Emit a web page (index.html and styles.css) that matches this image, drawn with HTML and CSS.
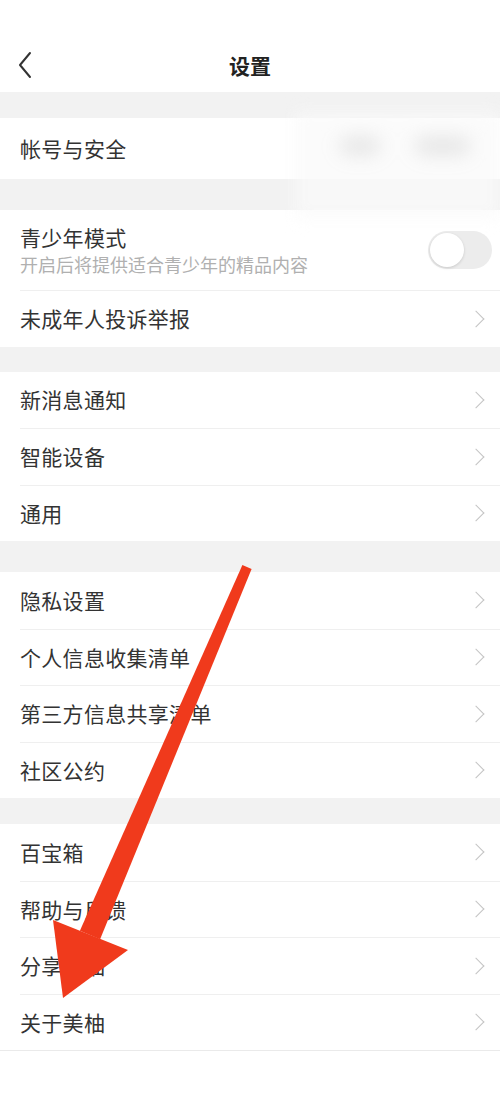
FILE: index.html
```html
<!DOCTYPE html>
<html lang="zh-CN">
<head>
<meta charset="utf-8">
<title>设置</title>
<link rel="stylesheet" href="styles.css">
</head>
<body>
<div class="page">
  <header class="topbar">
    <svg class="back" viewBox="0 0 16 28" width="16" height="28"><path d="M13 2 L3 14 L13 26" fill="none" stroke="#333" stroke-width="2" stroke-linecap="round" stroke-linejoin="round"/></svg>
    <h1 class="title">设置</h1>
  </header>

  <div class="gap g1"></div>
  <section class="group">
    <div class="row"><span class="label">帐号与安全</span></div>
  </section>
  <div class="blur"><span class="blob b1"></span><span class="blob b2"></span></div>

  <div class="gap g2"></div>
  <section class="group">
    <div class="row tall">
      <div class="stack">
        <span class="label">青少年模式</span>
        <span class="sub">开启后将提供适合青少年的精品内容</span>
      </div>
      <span class="toggle"><span class="knob"></span></span>
    </div>
    <div class="row"><span class="label">未成年人投诉举报</span><span class="chev"></span></div>
  </section>

  <div class="gap g3"></div>
  <section class="group">
    <div class="row"><span class="label">新消息通知</span><span class="chev"></span></div>
    <div class="row"><span class="label">智能设备</span><span class="chev"></span></div>
    <div class="row"><span class="label">通用</span><span class="chev"></span></div>
  </section>

  <div class="gap g4"></div>
  <section class="group">
    <div class="row"><span class="label">隐私设置</span><span class="chev"></span></div>
    <div class="row"><span class="label">个人信息收集清单</span><span class="chev"></span></div>
    <div class="row"><span class="label">第三方信息共享清单</span><span class="chev"></span></div>
    <div class="row"><span class="label">社区公约</span><span class="chev"></span></div>
  </section>

  <div class="gap g5"></div>
  <section class="group last">
    <div class="row"><span class="label">百宝箱</span><span class="chev"></span></div>
    <div class="row"><span class="label">帮助与反馈</span><span class="chev"></span></div>
    <div class="row"><span class="label">分享美柚</span><span class="chev"></span></div>
    <div class="row"><span class="label">关于美柚</span><span class="chev"></span></div>
  </section>

  <svg class="arrow" viewBox="0 0 500 1111" width="500" height="1111">
    <polygon points="242.4,565.1 251.6,568.9 100.1,939.3 79.9,930.7" fill="#f03a1c"/>
    <polygon points="53,920 128,950 63,998" fill="#f03a1c"/>
  </svg>
</div>
</body>
</html>
```

FILE: styles.css
```css
* { box-sizing: border-box; margin: 0; padding: 0; }
html, body { background: #fff; }
body {
  font-family: "Noto Sans CJK SC", "Noto Sans", sans-serif;
  color: #333;
  width: 500px;
  min-height: 1111px;
}
.page { position: relative; width: 500px; min-height: 1111px; background: #fff; }

.topbar {
  height: 92px;
  display: flex;
  align-items: center;
  justify-content: center;
  position: relative;
  padding-top: 38px;
}
.back { position: absolute; left: 17px; top: 51px; }
.title { font-size: 21px; font-weight: 700; color: #222; line-height: 1; }

.gap { background: #f2f2f2; }
.g1 { height: 26px; }
.g2 { height: 31px; }
.g3 { height: 25px; }
.g4 { height: 31px; }
.g5 { height: 26px; }

.group { background: #fff; }
.row {
  height: 56.5px;
  margin-left: 20px;
  padding-right: 14px;
  display: flex;
  align-items: center;
  justify-content: space-between;
  border-top: 1px solid #efefef;
}
.group .row:first-child { border-top: none; }
.group:first-of-type .row { height: 61px; }
.row.tall { height: 80px; }
.group.last { border-bottom: 1px solid #eaeaea; }

.label { font-size: 21px; color: #333; line-height: 1; letter-spacing: 0.3px; }
.stack { display: flex; flex-direction: column; gap: 7px; padding-top: 0; }
.sub { font-size: 18px; color: #b0b0b0; line-height: 1; }

.chev {
  width: 12px; height: 12px;
  border-top: 1.6px solid #c4c4c4;
  border-right: 1.6px solid #c4c4c4;
  transform: rotate(45deg);
  margin-right: 4px;
}

.toggle {
  width: 64px; height: 38px;
  border-radius: 19px;
  background: #ececec;
  position: relative;
  margin-right: -6px;
}
.knob {
  position: absolute; left: 2px; top: 2px;
  width: 34px; height: 34px; border-radius: 50%;
  background: #fff;
  box-shadow: 0 1px 3px rgba(0,0,0,0.15);
}

.blur {
  position: absolute; left: 295px; top: 112px;
  width: 205px; height: 106px;
  background: rgba(250,250,250,0.75);
  filter: blur(8px);
}
.blob {
  position: absolute; top: 26px; height: 16px; border-radius: 8px;
  background: #e2e2e2; filter: blur(6px);
}
.b1 { left: 45px; width: 40px; }
.b2 { left: 120px; width: 55px; }

.arrow { position: absolute; left: 0; top: 0; pointer-events: none; }
```
